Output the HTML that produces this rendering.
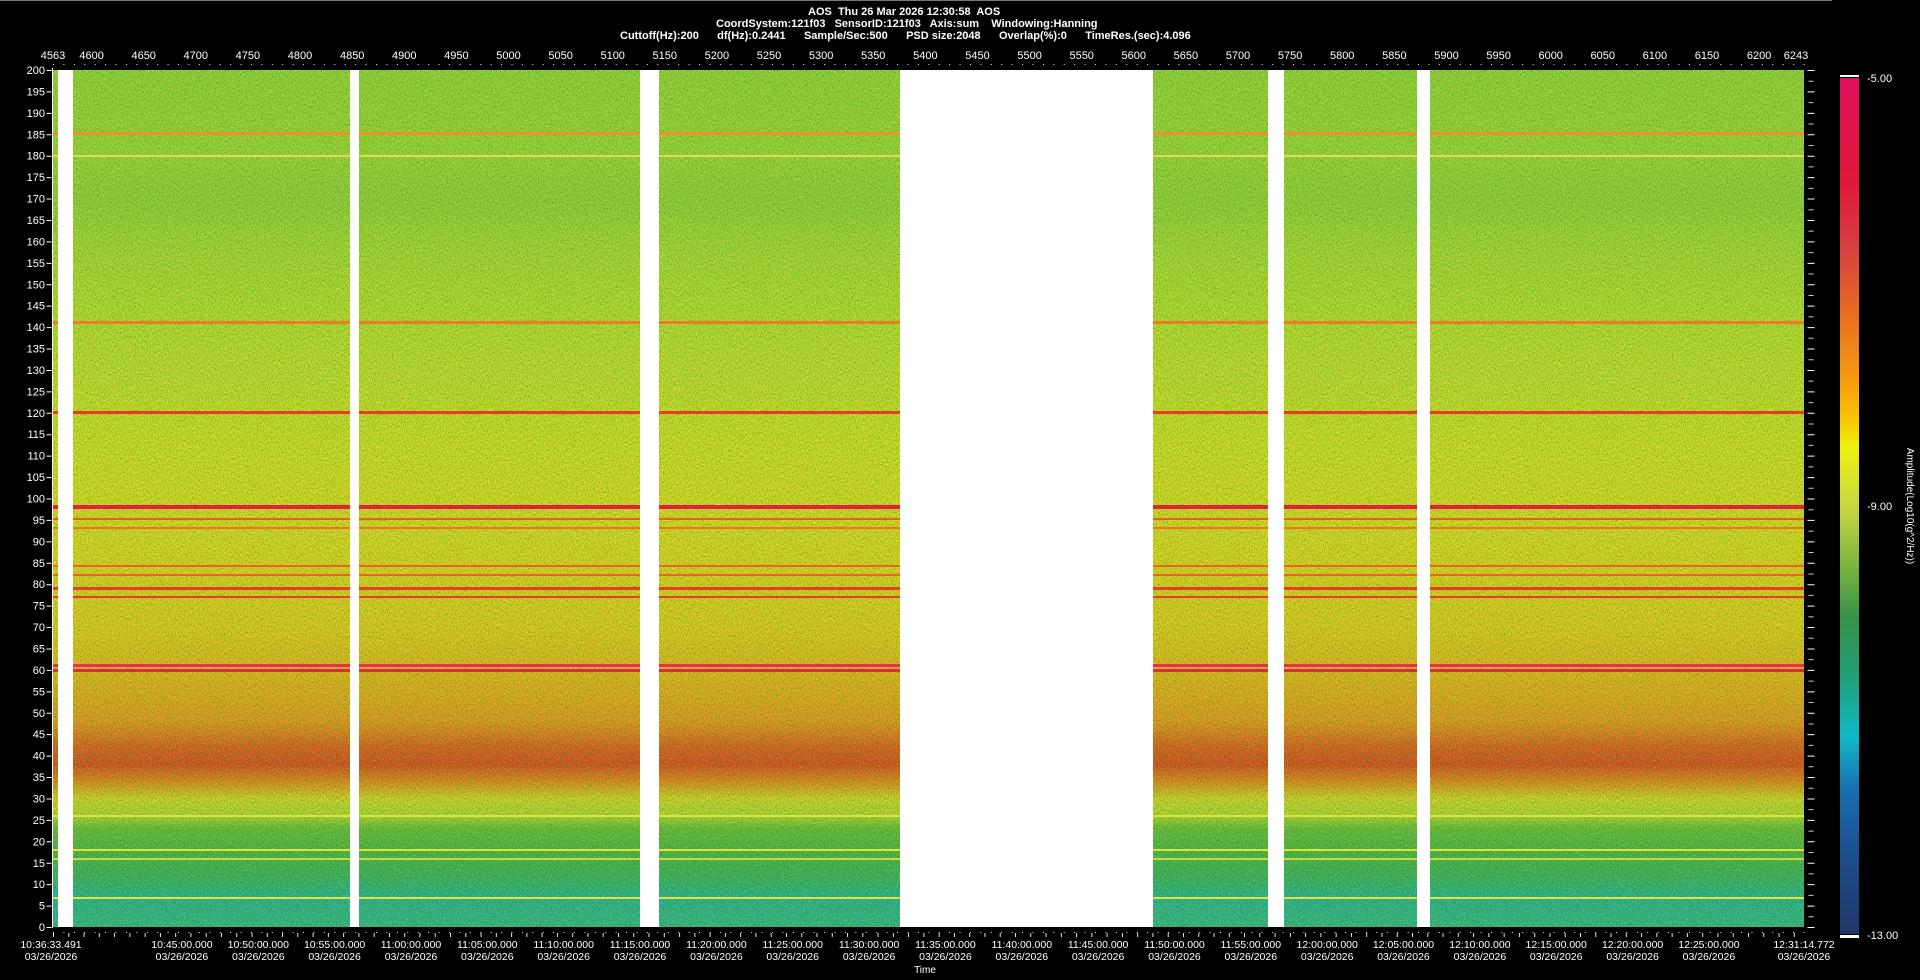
<!DOCTYPE html>
<html><head><meta charset="utf-8"><style>
html,body{margin:0;padding:0;background:#000;width:1920px;height:980px;overflow:hidden}
svg{display:block}
text{font-family:"Liberation Sans",Arial,sans-serif;fill:#fff}
.hd{white-space:pre}
</style></head><body>
<svg width="1920" height="980" viewBox="0 0 1920 980" xmlns="http://www.w3.org/2000/svg">
<defs>
<linearGradient id="spec" x1="0" y1="0" x2="0" y2="1">
<stop offset="0" stop-color="#a0cc40"/>
<stop offset="0.10" stop-color="#a8ce3e"/>
<stop offset="0.15" stop-color="#9cc840"/>
<stop offset="0.22" stop-color="#b6d23a"/>
<stop offset="0.35" stop-color="#d0d832"/>
<stop offset="0.45" stop-color="#e2d82a"/>
<stop offset="0.55" stop-color="#ecd226"/>
<stop offset="0.65" stop-color="#f0c422"/>
<stop offset="0.71" stop-color="#f4aa22"/>
<stop offset="0.76" stop-color="#f48e22"/>
<stop offset="0.79" stop-color="#ec5024"/>
<stop offset="0.81" stop-color="#e83c24"/>
<stop offset="0.83" stop-color="#f07a22"/>
<stop offset="0.85" stop-color="#e0cc30"/>
<stop offset="0.87" stop-color="#bcd038"/>
<stop offset="0.885" stop-color="#70b244"/>
<stop offset="0.91" stop-color="#52ac4c"/>
<stop offset="0.94" stop-color="#40a868"/>
<stop offset="0.965" stop-color="#28aaa4"/>
<stop offset="1" stop-color="#38ac90"/>
</linearGradient>
<linearGradient id="cbar" x1="0" y1="0" x2="0" y2="1">
<stop offset="0" stop-color="#e0105c"/>
<stop offset="0.12" stop-color="#e01838"/>
<stop offset="0.20" stop-color="#d84040"/>
<stop offset="0.28" stop-color="#e87020"/>
<stop offset="0.36" stop-color="#f8a010"/>
<stop offset="0.40" stop-color="#f8c800"/>
<stop offset="0.43" stop-color="#f0f010"/>
<stop offset="0.50" stop-color="#c8d840"/>
<stop offset="0.58" stop-color="#70b040"/>
<stop offset="0.63" stop-color="#389048"/>
<stop offset="0.70" stop-color="#20a078"/>
<stop offset="0.77" stop-color="#10b8c8"/>
<stop offset="0.83" stop-color="#1870b0"/>
<stop offset="0.90" stop-color="#1c5090"/>
<stop offset="1" stop-color="#203868"/>
</linearGradient>
<filter id="noise" x="0" y="0" width="100%" height="100%">
<feTurbulence type="fractalNoise" baseFrequency="1.4 0.5" numOctaves="2" seed="3"/>
<feColorMatrix type="matrix" values="0 0 0 0 0  0 0 0 0 0.35  0 0 0 0 0  0 0 0 1.6 -0.6"/>
</filter>
<filter id="noise2" x="0" y="0" width="100%" height="100%">
<feTurbulence type="fractalNoise" baseFrequency="1.2 0.6" numOctaves="1" seed="9"/>
<feColorMatrix type="matrix" values="0 0 0 0 1  0 0 0 0 0.95  0 0 0 0 0.2  0 0 0 1.6 -0.75"/>
</filter>
</defs>

<line x1="0" y1="0.5" x2="1832" y2="0.5" stroke="#777"/>

<text class="hd" x="808" y="15" font-size="11" font-weight="bold">AOS  Thu 26 Mar 2026 12:30:58  AOS</text>
<text class="hd" x="716" y="27" font-size="11" font-weight="bold">CoordSystem:121f03   SensorID:121f03   Axis:sum    Windowing:Hanning</text>
<text class="hd" x="620" y="39" font-size="11" font-weight="bold">Cuttoff(Hz):200      df(Hz):0.2441      Sample/Sec:500      PSD size:2048      Overlap(%):0      TimeRes.(sec):4.096</text>

<rect x="53" y="70" width="1751" height="857" fill="url(#spec)"/>
<rect x="53" y="70" width="1751" height="857" filter="url(#noise)" opacity="0.9"/>
<rect x="53" y="70" width="1751" height="857" filter="url(#noise2)" opacity="0.7"/>
<g>
<rect x="53" y="132" width="1751" height="3" fill="#f0902a"/>
<rect x="53" y="155" width="1751" height="2" fill="#f0e060" opacity="0.8"/>
<rect x="53" y="321" width="1751" height="3" fill="#f07a28"/>
<rect x="53" y="411" width="1751" height="3" fill="#e83a28"/>
<rect x="53" y="505" width="1751" height="4" fill="#e0203c"/>
<rect x="53" y="518" width="1751" height="2" fill="#ee5a28"/>
<rect x="53" y="527" width="1751" height="2" fill="#f07028"/>
<rect x="53" y="565" width="1751" height="2" fill="#f06028"/>
<rect x="53" y="574" width="1751" height="2" fill="#f06028"/>
<rect x="53" y="587" width="1751" height="3" fill="#e04028"/>
<rect x="53" y="596" width="1751" height="2" fill="#e04028"/>
<rect x="53" y="664" width="1751" height="3" fill="#e83048"/>
<rect x="53" y="669" width="1751" height="3" fill="#e02848"/>
<rect x="53" y="815" width="1751" height="2" fill="#e8e040"/>
<rect x="53" y="849" width="1751" height="2" fill="#e0e040"/>
<rect x="53" y="858" width="1751" height="2" fill="#c8d840"/>
<rect x="53" y="897" width="1751" height="2" fill="#e8e040"/>
</g>
<g fill="#fff">
<rect x="58" y="70" width="15" height="857"/>
<rect x="350" y="70" width="9" height="857"/>
<rect x="640" y="70" width="19" height="857"/>
<rect x="900" y="70" width="253" height="857"/>
<rect x="1268" y="70" width="16" height="857"/>
<rect x="1417" y="70" width="13" height="857"/>
</g>

<line x1="52.5" y1="68" x2="52.5" y2="928" stroke="#fff"/>
<line x1="53" y1="64.5" x2="1806" y2="64.5" stroke="#fff" stroke-dasharray="1 9.42" opacity="0.9"/>
<line x1="53" y1="932.5" x2="1806" y2="932.5" stroke="#fff" stroke-dasharray="1 9.42" opacity="0.9"/>
<line x1="53" y1="935" x2="1806" y2="935" stroke="#fff" stroke-width="4" stroke-dasharray="1 14.27" opacity="0.9"/>
<line x1="49" y1="70" x2="49" y2="928" stroke="#fff" stroke-width="5" stroke-dasharray="1 20.425" />
<line x1="1811" y1="70" x2="1811" y2="928" stroke="#fff" stroke-width="7" stroke-dasharray="1 20.425"/>
<line x1="1811" y1="80.7" x2="1811" y2="928" stroke="#fff" stroke-width="5" stroke-dasharray="1 20.425" opacity="0.8"/>

<g font-size="11" text-anchor="end">
<text x="45" y="74">200</text><text x="45" y="95.4">195</text><text x="45" y="116.9">190</text><text x="45" y="138.3">185</text><text x="45" y="159.7">180</text><text x="45" y="181.1">175</text><text x="45" y="202.6">170</text><text x="45" y="224">165</text><text x="45" y="245.4">160</text><text x="45" y="266.8">155</text><text x="45" y="288.3">150</text><text x="45" y="309.7">145</text><text x="45" y="331.1">140</text><text x="45" y="352.5">135</text><text x="45" y="374">130</text><text x="45" y="395.4">125</text><text x="45" y="416.8">120</text><text x="45" y="438.2">115</text><text x="45" y="459.7">110</text><text x="45" y="481.1">105</text><text x="45" y="502.5">100</text><text x="45" y="523.9">95</text><text x="45" y="545.4">90</text><text x="45" y="566.8">85</text><text x="45" y="588.2">80</text><text x="45" y="609.6">75</text><text x="45" y="631">70</text><text x="45" y="652.5">65</text><text x="45" y="673.9">60</text><text x="45" y="695.3">55</text><text x="45" y="716.8">50</text><text x="45" y="738.2">45</text><text x="45" y="759.6">40</text><text x="45" y="781">35</text><text x="45" y="802.5">30</text><text x="45" y="823.9">25</text><text x="45" y="845.3">20</text><text x="45" y="866.8">15</text><text x="45" y="888.2">10</text><text x="45" y="909.6">5</text><text x="45" y="931">0</text>
</g>

<g font-size="11" text-anchor="middle">
<text x="53" y="59">4563</text><text x="91.6" y="59">4600</text><text x="143.7" y="59">4650</text><text x="195.8" y="59">4700</text><text x="247.9" y="59">4750</text><text x="300" y="59">4800</text><text x="352.2" y="59">4850</text><text x="404.3" y="59">4900</text><text x="456.4" y="59">4950</text><text x="508.5" y="59">5000</text><text x="560.6" y="59">5050</text><text x="612.7" y="59">5100</text><text x="664.8" y="59">5150</text><text x="716.9" y="59">5200</text><text x="769" y="59">5250</text><text x="821.1" y="59">5300</text><text x="873.2" y="59">5350</text><text x="925.4" y="59">5400</text><text x="977.5" y="59">5450</text><text x="1029.6" y="59">5500</text><text x="1081.7" y="59">5550</text><text x="1133.8" y="59">5600</text><text x="1185.9" y="59">5650</text><text x="1238" y="59">5700</text><text x="1290.1" y="59">5750</text><text x="1342.2" y="59">5800</text><text x="1394.4" y="59">5850</text><text x="1446.5" y="59">5900</text><text x="1498.6" y="59">5950</text><text x="1550.7" y="59">6000</text><text x="1602.8" y="59">6050</text><text x="1654.9" y="59">6100</text><text x="1707" y="59">6150</text><text x="1759.1" y="59">6200</text><text x="1796" y="59">6243</text>
</g>

<g font-size="10.5" text-anchor="middle">
<text x="51" y="948">10:36:33.491</text><text x="51" y="960">03/26/2026</text>
<text x="181.9" y="948">10:45:00.000</text><text x="181.9" y="960">03/26/2026</text>
<text x="258.3" y="948">10:50:00.000</text><text x="258.3" y="960">03/26/2026</text>
<text x="334.6" y="948">10:55:00.000</text><text x="334.6" y="960">03/26/2026</text>
<text x="411" y="948">11:00:00.000</text><text x="411" y="960">03/26/2026</text>
<text x="487.3" y="948">11:05:00.000</text><text x="487.3" y="960">03/26/2026</text>
<text x="563.7" y="948">11:10:00.000</text><text x="563.7" y="960">03/26/2026</text>
<text x="640" y="948">11:15:00.000</text><text x="640" y="960">03/26/2026</text>
<text x="716.4" y="948">11:20:00.000</text><text x="716.4" y="960">03/26/2026</text>
<text x="792.7" y="948">11:25:00.000</text><text x="792.7" y="960">03/26/2026</text>
<text x="869.1" y="948">11:30:00.000</text><text x="869.1" y="960">03/26/2026</text>
<text x="945.4" y="948">11:35:00.000</text><text x="945.4" y="960">03/26/2026</text>
<text x="1021.8" y="948">11:40:00.000</text><text x="1021.8" y="960">03/26/2026</text>
<text x="1098.1" y="948">11:45:00.000</text><text x="1098.1" y="960">03/26/2026</text>
<text x="1174.5" y="948">11:50:00.000</text><text x="1174.5" y="960">03/26/2026</text>
<text x="1250.8" y="948">11:55:00.000</text><text x="1250.8" y="960">03/26/2026</text>
<text x="1327.2" y="948">12:00:00.000</text><text x="1327.2" y="960">03/26/2026</text>
<text x="1403.5" y="948">12:05:00.000</text><text x="1403.5" y="960">03/26/2026</text>
<text x="1479.9" y="948">12:10:00.000</text><text x="1479.9" y="960">03/26/2026</text>
<text x="1556.2" y="948">12:15:00.000</text><text x="1556.2" y="960">03/26/2026</text>
<text x="1632.6" y="948">12:20:00.000</text><text x="1632.6" y="960">03/26/2026</text>
<text x="1708.9" y="948">12:25:00.000</text><text x="1708.9" y="960">03/26/2026</text>
<text x="1804" y="948">12:31:14.772</text><text x="1804" y="960">03/26/2026</text>
<text x="925" y="973" font-size="10">Time</text>
</g>

<rect x="1840" y="75" width="19" height="2" fill="#fff"/>
<rect x="1840" y="78" width="19" height="856" fill="url(#cbar)"/>
<rect x="1840" y="935" width="19" height="3" fill="#fff"/>
<g font-size="11">
<text x="1867" y="82">-5.00</text>
<text x="1867" y="510">-9.00</text>
<text x="1867" y="939">-13.00</text>
</g>
<text font-size="10" text-anchor="middle" transform="translate(1907,506) rotate(90)">Amplitude(Log10(g^2/Hz))</text>
</svg>
</body></html>
